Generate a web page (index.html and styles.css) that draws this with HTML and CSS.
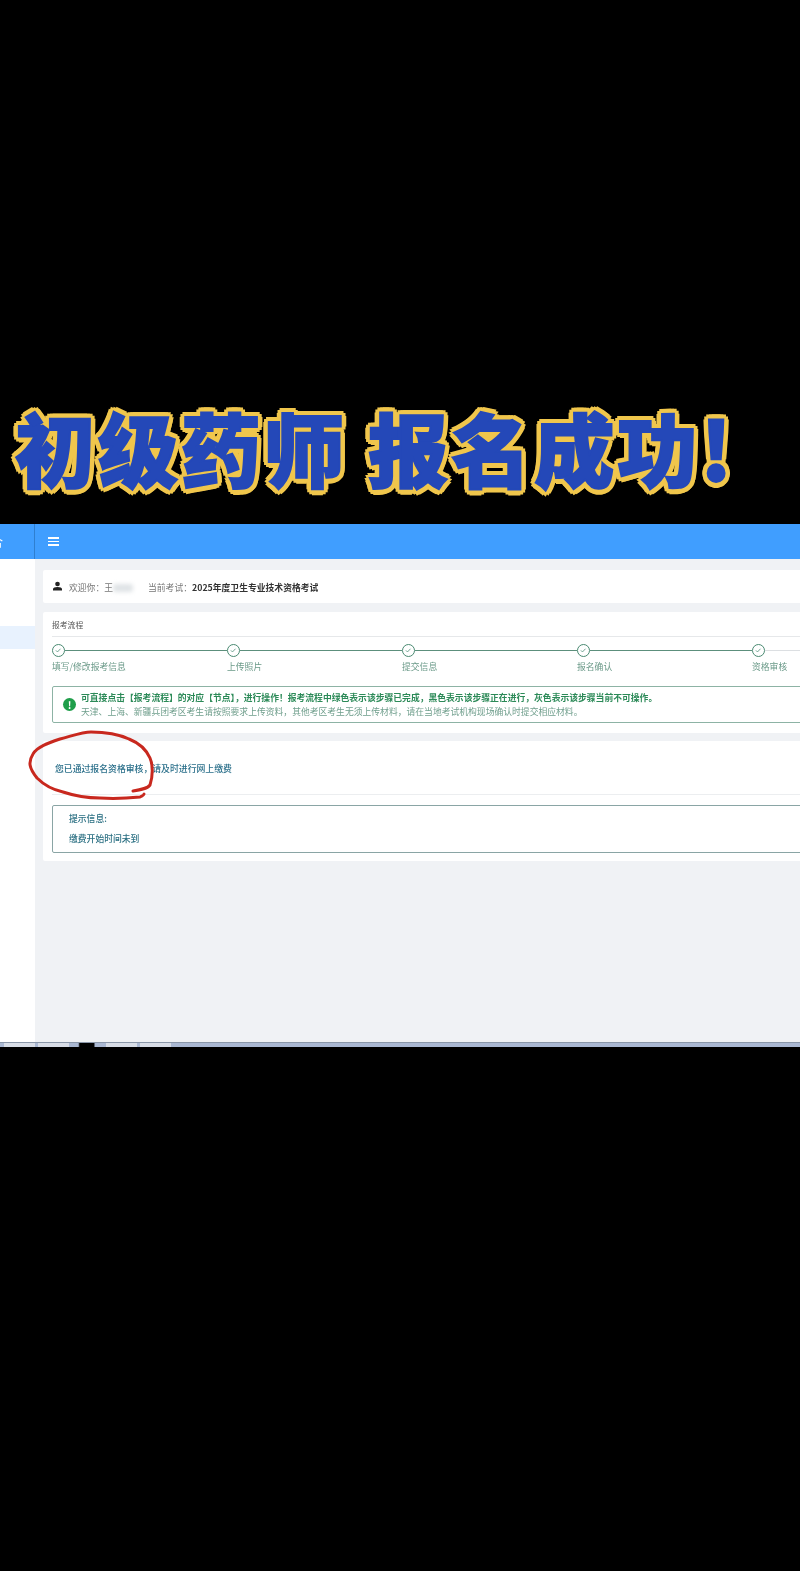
FILE: index.html
```html
<!DOCTYPE html>
<html lang="zh-CN">
<head>
    <meta charset="UTF-8">
    <title>初级药师 报名成功</title>
    <link rel="stylesheet" href="styles.css">
</head>
<body>
    <h1 class="poster-title">初级药师 报名成功!</h1>

    <div class="screen">
        <div class="logo-cell"><span class="logo-text">合</span></div>
        <div class="top-bar">
            <div class="menu-icon"><i></i><i></i><i></i></div>
        </div>

        <div class="side-menu">
            <div class="side-item"></div>
        </div>

        <div class="main">
            <div class="card welcome-card">
                <svg class="user-icon" viewBox="0 0 10 10"><circle cx="5" cy="2.8" r="2.6"/><path d="M0 10V8.3C0 6.8 2 6 5 6s5 .8 5 2.3V10z"/></svg>
                <span>欢迎你：王</span><span class="name-smudge"></span>
                <span class="exam-label">当前考试：<b>2025年度卫生专业技术资格考试</b></span>
            </div>

            <div class="card flow-card">
                <div class="flow-title">报考流程</div>
                <div class="steps">
                    <div class="step">
                        <div class="step-head"><span class="step-dot"><svg viewBox="0 0 13 13"><path d="M3.6 6.7l2 2 3.8-4"/></svg></span><span class="step-line"></span></div>
                        <div class="step-label">填写/修改报考信息</div>
                    </div>
                    <div class="step">
                        <div class="step-head"><span class="step-dot"><svg viewBox="0 0 13 13"><path d="M3.6 6.7l2 2 3.8-4"/></svg></span><span class="step-line"></span></div>
                        <div class="step-label">上传照片</div>
                    </div>
                    <div class="step">
                        <div class="step-head"><span class="step-dot"><svg viewBox="0 0 13 13"><path d="M3.6 6.7l2 2 3.8-4"/></svg></span><span class="step-line"></span></div>
                        <div class="step-label">提交信息</div>
                    </div>
                    <div class="step">
                        <div class="step-head"><span class="step-dot"><svg viewBox="0 0 13 13"><path d="M3.6 6.7l2 2 3.8-4"/></svg></span><span class="step-line"></span></div>
                        <div class="step-label">报名确认</div>
                    </div>
                    <div class="step">
                        <div class="step-head"><span class="step-dot"><svg viewBox="0 0 13 13"><path d="M3.6 6.7l2 2 3.8-4"/></svg></span><span class="step-line grey"></span></div>
                        <div class="step-label">资格审核</div>
                    </div>
                </div>
                <div class="notice">
                    <span class="notice-icon">!</span>
                    <div>
                        <div class="notice-main">可直接点击【报考流程】的对应【节点】，进行操作！报考流程中绿色表示该步骤已完成，黑色表示该步骤正在进行，灰色表示该步骤当前不可操作。</div>
                        <div class="notice-sub">天津、上海、新疆兵团考区考生请按照要求上传资料，其他考区考生无须上传材料，请在当地考试机构现场确认时提交相应材料。</div>
                    </div>
                </div>
            </div>

            <div class="card result-card">
                <div class="result-text">您已通过报名资格审核，请及时进行网上缴费</div>
                <div class="tip-box">
                    <div>提示信息:</div>
                    <div>缴费开始时间未到</div>
                </div>
            </div>
        </div>

        <div class="taskbar">
            <span class="task-tab"></span>
            <span class="task-tab"></span>
            <span class="task-tab dark"></span>
            <span class="task-tab"></span>
            <span class="task-tab"></span>
        </div>

        <svg class="red-circle" viewBox="0 0 800 523">
            <path d="M133 267C140 266 147 265 150 261C153 252 153 241 150 234C146 225 139 219 129 215C118 210 106 208 91 208C82 208 72 212 60 215C48 219 37 223 33 230C28 238 29 244 37 254C45 262 54 266 63 268C75 272 88 274 100 274C115 275 130 274 140 273C142 272 144 271 144 270"/>
        </svg>
    </div>
</body>
</html>
```

FILE: styles.css
```css
body {
    margin: 0;
    background: #000;
    height: 1571px;
    overflow: hidden;
    font-family: "Noto Sans CJK SC", "Liberation Sans", sans-serif;
}
.poster-title {
    margin: 0;
    padding: 394px 0 0 15px;
    height: 524px;
    box-sizing: border-box;
    font-size: 80px;
    line-height: 104px;
    font-weight: 900;
    letter-spacing: 3px;
    white-space: pre;
    color: #2448b8;
    -webkit-text-stroke: 2px #2448b8;
    text-shadow:
        5.5px 0 #f0c64c, 4.8px 2.7px #f0c64c, 2.7px 4.8px #f0c64c,
        0 5.5px #f0c64c, -2.7px 4.8px #f0c64c, -4.8px 2.7px #f0c64c,
        -5.5px 0 #f0c64c, -4.8px -2.7px #f0c64c, -2.7px -4.8px #f0c64c,
        0 -5.5px #f0c64c, 2.7px -4.8px #f0c64c, 4.8px -2.7px #f0c64c,
        3px 0 #f0c64c, 0 3px #f0c64c, -3px 0 #f0c64c, 0 -3px #f0c64c;
    filter: blur(0.5px);
}
.screen {
    position: relative;
    height: 523px;
    display: grid;
    grid-template-columns: 35px 1fr;
    grid-template-rows: 35px 1fr 5px;
    background: #f0f2f5;
    overflow: hidden;
    filter: blur(0.45px);
}
.logo-cell {
    background: #409eff;
    border-right: 1px solid #2f7fd0;
    display: flex;
    align-items: center;
    justify-content: flex-end;
    padding-right: 31px;
    overflow: hidden;
}
.logo-text {
    color: #fff;
    font-size: 12px;
    white-space: nowrap;
}
.top-bar {
    background: #409eff;
    display: flex;
    align-items: center;
    padding-left: 13px;
}
.menu-icon {
    width: 11px;
    display: flex;
    flex-direction: column;
    gap: 2px;
}
.menu-icon i {
    display: block;
    height: 1.6px;
    background: #fff;
}
.side-menu {
    background: #fff;
    padding-top: 67px;
}
.side-item {
    height: 23px;
    background: #e8f2fe;
}
.main {
    min-width: 0;
    overflow: hidden;
    padding: 11px 0 0 8px;
    display: flex;
    flex-direction: column;
    gap: 9px;
}
.card {
    background: #fff;
    border-radius: 2px 0 0 2px;
    box-sizing: border-box;
}
.welcome-card {
    height: 33px;
    padding: 2px 0 0 10px;
    display: flex;
    align-items: center;
    font-size: 8.8px;
    color: #777;
    white-space: nowrap;
}
.user-icon {
    width: 9px;
    height: 10px;
    fill: #222;
    margin-right: 7px;
    margin-top: -3px;
}
.name-smudge {
    width: 20px;
    height: 8px;
    background: #dfe3e6;
    border-radius: 3px;
    filter: blur(2px);
}
.exam-label {
    margin-left: 15px;
}
.exam-label b {
    color: #333;
}
.flow-card {
    height: 121px;
    padding: 0 0 0 9px;
    overflow: hidden;
}
.flow-title {
    height: 24px;
    line-height: 26px;
    font-size: 7.8px;
    color: #555;
    border-bottom: 1px solid #e6e8ea;
}
.steps {
    display: flex;
    margin-top: 7px;
    width: 900px;
}
.step {
    width: 175px;
    flex: none;
}
.step-head {
    display: flex;
    align-items: center;
    height: 13px;
}
.step-dot {
    width: 13px;
    height: 13px;
    box-sizing: border-box;
    border: 1.3px solid #4a8a72;
    border-radius: 50%;
    flex: none;
}
.step-dot svg {
    display: block;
    width: 10.4px;
    height: 10.4px;
    fill: none;
    stroke: #4f8f78;
    stroke-width: 1;
}
.step-line {
    flex: 1;
    height: 1.5px;
    background: #5c8f7c;
}
.step-line.grey {
    background: #dcdfe2;
}
.step-label {
    margin-top: 4px;
    font-size: 8.8px;
    line-height: 12px;
    color: #6b9a89;
    white-space: nowrap;
}
.notice {
    margin-top: 13px;
    width: 900px;
    height: 37px;
    box-sizing: border-box;
    border: 1px solid #8db3a5;
    border-radius: 2px;
    display: flex;
    align-items: center;
    padding-left: 10px;
    gap: 5px;
    white-space: nowrap;
    font-size: 8.8px;
}
.notice-icon {
    width: 13px;
    height: 13px;
    border-radius: 50%;
    background: #1f9e4a;
    color: #fff;
    font-size: 10px;
    font-weight: 700;
    line-height: 13px;
    text-align: center;
    flex: none;
}
.notice-main {
    font-weight: 700;
    color: #2c8a58;
    line-height: 15px;
}
.notice-sub {
    color: #6f9e8c;
    line-height: 14px;
}
.result-card {
    height: 120px;
    padding-left: 9px;
    margin-top: -1px;
    overflow: hidden;
}
.result-text {
    height: 53px;
    line-height: 56px;
    padding-left: 3px;
    border-bottom: 1px solid #eceef0;
    font-size: 8.85px;
    font-weight: 500;
    color: #2a6f8a;
}
.tip-box {
    margin-top: 10px;
    width: 900px;
    height: 48px;
    box-sizing: border-box;
    border: 1px solid #8aa5a5;
    border-radius: 2px;
    padding: 3px 0 0 16px;
    font-size: 8.8px;
    font-weight: 500;
    line-height: 20px;
    color: #2a6f82;
}
.taskbar {
    grid-column: 1 / 3;
    background: #aab8d2;
    border-top: 1px solid #8a96a8;
    box-sizing: border-box;
    display: flex;
    gap: 3px;
    padding-left: 4px;
}
.task-tab {
    width: 31px;
    background: #d8dde6;
}
.task-tab.dark {
    background: linear-gradient(90deg, #aab8d2 20%, #000 25%, #000 70%, #aab8d2 75%);
}
.red-circle {
    position: absolute;
    left: 0;
    top: 0;
    width: 800px;
    height: 523px;
    fill: none;
    stroke: #c8281e;
    stroke-width: 3;
    stroke-linecap: round;
}
```
